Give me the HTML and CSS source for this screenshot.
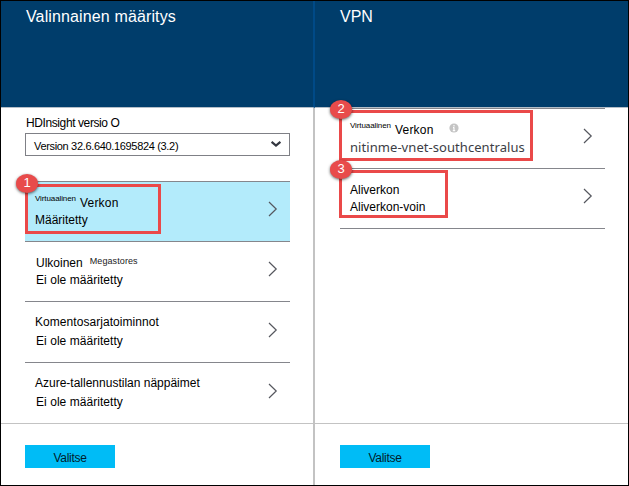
FILE: index.html
```html
<!DOCTYPE html>
<html lang="fi">
<head>
<meta charset="utf-8">
<title>Valinnainen määritys</title>
<link rel="stylesheet" href="styles.css">
</head>
<body>
<main class="frame">
  <section class="blade blade-left">
    <header class="head"><h1 class="t-title">Valinnainen määritys</h1></header>
    <div class="content">
      <div class="field-label"><span class="t-label">HDInsight versio O</span></div>
      <div class="select">
        <span class="t-select">Version 32.6.640.1695824 (3.2)</span>
        <svg class="caret" width="12" height="8" viewBox="0 0 12 8"><path d="M1.6 1.8 6 5.6 10.4 1.8" fill="none" stroke="#333740" stroke-width="2.2"/></svg>
      </div>
      <div class="rows">
        <div class="row selected">
          <div class="text">
            <div class="line"><span class="sup">Virtuaalinen</span><span class="t-verkon">Verkon</span></div>
            <div class="line second"><span class="t-set">Määritetty</span></div>
          </div>
          <svg class="chev" width="10" height="16" viewBox="0 0 10 16"><path d="M1 1 8.2 8 1 15"/></svg>
          <div class="mark mark-1"><b class="num">1</b></div>
        </div>
        <div class="row inset">
          <div class="text">
            <div class="line"><span class="t-ulk">Ulkoinen</span><span class="mega">Megastores</span></div>
            <div class="line second"><span class="t-ei">Ei ole määritetty</span></div>
          </div>
          <svg class="chev" width="10" height="16" viewBox="0 0 10 16"><path d="M1 1 8.2 8 1 15"/></svg>
        </div>
        <div class="row tall">
          <div class="text">
            <div class="line"><span class="t-kom">Komentosarjatoiminnot</span></div>
            <div class="line second"><span class="t-ei">Ei ole määritetty</span></div>
          </div>
          <svg class="chev" width="10" height="16" viewBox="0 0 10 16"><path d="M1 1 8.2 8 1 15"/></svg>
        </div>
        <div class="row tall">
          <div class="text">
            <div class="line"><span class="t-azure">Azure-tallennustilan näppäimet</span></div>
            <div class="line second"><span class="t-ei">Ei ole määritetty</span></div>
          </div>
          <svg class="chev" width="10" height="16" viewBox="0 0 10 16"><path d="M1 1 8.2 8 1 15"/></svg>
        </div>
      </div>
    </div>
    <footer class="foot"><button class="btn">Valitse</button></footer>
  </section>
  <section class="blade blade-right">
    <header class="head"><h1 class="t-vpn">VPN</h1></header>
    <div class="content">
      <div class="rows closed">
        <div class="row">
          <div class="text">
            <div class="line"><span class="sup">Virtuaalinen</span><span class="t-verkon">Verkon</span>
              <svg class="info" width="10" height="10" viewBox="0 0 10 10"><circle cx="5" cy="5" r="4.6" fill="#c4c4c4"/><path d="M5 1.9v1.5M5 4.2v3.6M4 4.6h1M3.8 7.6h2.4" stroke="#fff" stroke-width="1.1"/></svg>
            </div>
            <div class="line second"><span class="t-vnet">nitinme-vnet-southcentralus</span></div>
          </div>
          <svg class="chev" width="10" height="16" viewBox="0 0 10 16"><path d="M1 1 8.2 8 1 15"/></svg>
          <div class="mark mark-2"><b class="num">2</b></div>
        </div>
        <div class="row">
          <div class="text">
            <div class="line"><span class="t-ali">Aliverkon</span></div>
            <div class="line second"><span class="t-voin">Aliverkon-voin</span></div>
          </div>
          <svg class="chev" width="10" height="16" viewBox="0 0 10 16"><path d="M1 1 8.2 8 1 15"/></svg>
          <div class="mark mark-3"><b class="num">3</b></div>
        </div>
      </div>
    </div>
    <footer class="foot"><button class="btn">Valitse</button></footer>
  </section>
</main>
</body>
</html>
```
FILE: styles.css
```css
* { box-sizing: border-box; }
body {
  margin: 0;
  font: 12px/16px "Liberation Sans", Arial, sans-serif;
  color: #000;
}
.frame {
  width: 629px;
  height: 486px;
  display: grid;
  grid-template-columns: 314px 1fr;
  border: 1px solid #000;
  background: #fff;
}
.blade {
  display: flex;
  flex-direction: column;
  min-width: 0;
}
.blade-left { border-right: 2px solid #c3c3c3; }
.head {
  height: 107px;
  padding: 6px 0 0 25px;
  background: #003d6b;
  border-bottom: 1px solid #b4bec8;
  color: #fff;
}
.blade-left .head {
  margin-right: -2px;
  border-right: 2px solid #004a87;
}
h1 {
  margin: 0;
  font-size: 16px;
  line-height: 20px;
  font-weight: 400;
  white-space: nowrap;
}
.t-title { letter-spacing: .13px; }
.content {
  flex: 1;
  padding: 0 23px 0 24px;
}
.blade-right .content { padding: 0 23px 0 25px; }
.field-label {
  height: 25px;
  padding: 7px 0 0 1px;
}
.t-label { letter-spacing: -.4px; }
.select {
  height: 23px;
  border: 1px solid #7f8086;
  display: flex;
  align-items: center;
  justify-content: space-between;
  padding: 3px 7px 0 8px;
}
.t-select { font-size: 11px; letter-spacing: -.33px; }
.caret { margin-top: -4px; }
.rows { margin-top: 25px; }
.rows.closed {
  margin-top: 0;
  border-bottom: 1px solid #85868c;
}
.row {
  position: relative;
  height: 60px;
  border-top: 1px solid #85868c;
  display: flex;
  justify-content: space-between;
  padding: 13px 12px 0 10px;
}
.selected { background: #b3ebfb; }
.inset { padding-left: 11px; }
.tall { height: 61px; padding-top: 12px; }
.tall .second { margin-top: 3px; padding-left: 1px; }
.line {
  display: flex;
  height: 16px;
  white-space: nowrap;
}
.second { margin-top: 1px; }
.chev { margin-top: 6px; }
.tall .chev { margin-top: 8px; }
.chev path { fill: none; stroke: #55575e; stroke-width: 1.2; }
.sup {
  width: 45px;
  font-size: 8px;
  line-height: 8px;
  letter-spacing: -.1px;
}
.mega { margin-left: 7px; font-size: 9px; line-height: 13px; letter-spacing: .1px; color: #222; }
.info { margin: 1px 0 0 13px; }
.t-verkon { width: 41px; letter-spacing: .2px; }
.t-ei, .t-kom { letter-spacing: .05px; }
.t-vnet { font: 13px/16px "Noto Sans", sans-serif; color: #3b3d45; letter-spacing: .06px; }
.foot {
  height: 62px;
  padding: 21px 0 0 24px;
  border-top: 1px solid #c3c3c3;
}
.blade-right .foot { padding-left: 25px; }
.btn {
  display: block;
  width: 90px;
  height: 23px;
  border: 0;
  padding: 3px 0 0;
  background: #00bcf6;
  font: 12px/16px "Liberation Sans", Arial, sans-serif;
  letter-spacing: -.3px;
  color: #001c2c;
}
.mark {
  position: absolute;
  border: 3px solid #ea4949;
}
.mark-1 { left: 0; top: 2px; width: 136px; height: 50px; }
.mark-2 { left: -1px; top: 1px; width: 194px; height: 51px; }
.mark-3 { left: -1px; top: 1px; width: 109px; height: 48px; }
.num {
  position: absolute;
  left: -12px;
  top: -13px;
  width: 22px;
  height: 19px;
  border-radius: 50%;
  background: #e84b4b;
  box-shadow: 0 1px 3px rgba(0, 0, 0, .6);
  color: #fff;
  font: 13px/18px "Liberation Sans", Arial, sans-serif;
  text-align: center;
}
```
